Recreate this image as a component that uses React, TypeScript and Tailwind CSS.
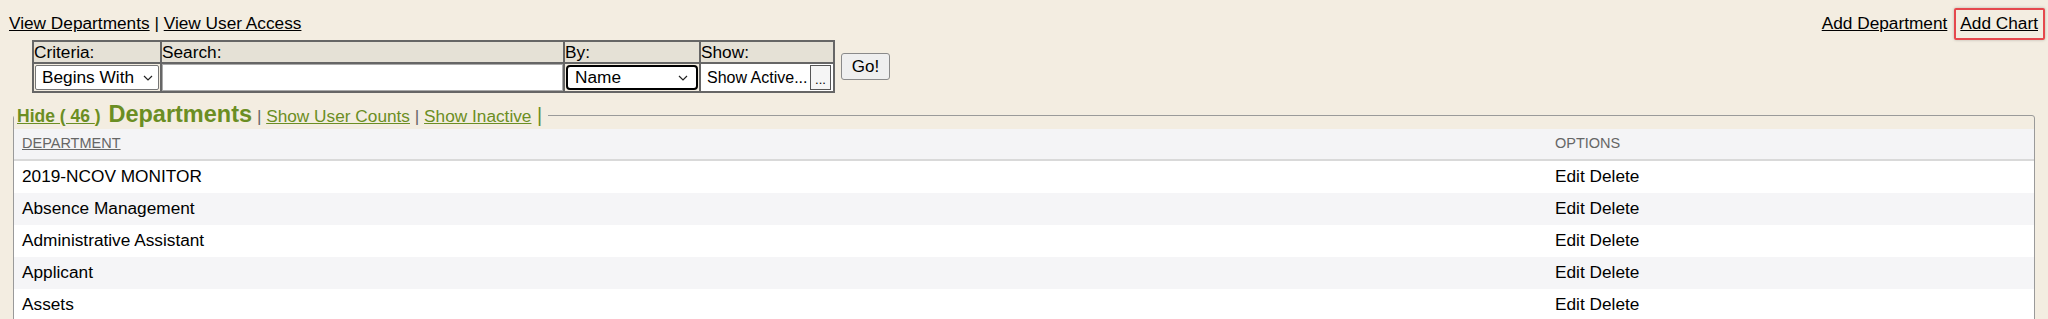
const departments = [
  "2019-NCOV MONITOR",
  "Absence Management",
  "Administrative Assistant",
  "Applicant",
  "Assets",
  "Benefits",
  "Billing",
  "Compliance",
]

function Chevron() {
  return (
    <svg width="10" height="6" viewBox="0 0 10 6" fill="none" className="shrink-0">
      <path d="M1 1l4 4 4-4" stroke="#222" strokeWidth="1.2" />
    </svg>
  )
}

export default function App() {
  return (
    <div className="min-h-screen bg-[#f3ede1] font-['Liberation_Sans',Arial,sans-serif] text-[17.25px] text-black">
      {/* Top links */}
      <div className="flex justify-between pt-[13px] pl-[9px] pr-[10px] leading-[20px]">
        <div>
          <a className="underline">View Departments</a> | <a className="underline">View User Access</a>
        </div>
        <div className="flex gap-[13px]">
          <a className="underline">Add Department</a>
          <span className="relative">
            <a className="underline">Add Chart</a>
            <span className="absolute -left-[6px] -right-[7px] -top-[5px] -bottom-[7px] border-2 border-[#e5484d] rounded-[2px] shadow-[0_0_3px_rgba(0,0,0,0.25)]" />
          </span>
        </div>
      </div>

      {/* Filter */}
      <div className="flex items-center gap-[6px] mt-[7px] ml-[32px]">
        <table className="border-collapse border-2 border-[#666]">
          <thead>
            <tr className="bg-[#e5e1d6] text-left leading-[20px]">
              <th className="border-2 border-[#666] p-0 font-normal w-[128px]">Criteria:</th>
              <th className="border-2 border-[#666] p-0 font-normal w-[403px]">Search:</th>
              <th className="border-2 border-[#666] p-0 font-normal w-[136px]">By:</th>
              <th className="border-2 border-[#666] p-0 font-normal w-[134px]">Show:</th>
            </tr>
          </thead>
          <tbody>
            <tr className="h-[27px]">
              <td className="border-2 border-[#666] p-[1px]">
                <div className="flex items-center justify-between h-[25px] bg-white border border-[#767676] rounded-[2px] pl-[6px] pr-[5px]">
                  <span>Begins With</span>
                  <Chevron />
                </div>
              </td>
              <td className="border-2 border-[#666] p-0">
                <div className="h-[27px] bg-white border border-[#aaa]" />
              </td>
              <td className="border-2 border-[#666] p-[1px]">
                <div className="flex items-center justify-between h-[25px] bg-white border-2 border-black rounded-[4px] pl-[7px] pr-[8px]">
                  <span>Name</span>
                  <Chevron />
                </div>
              </td>
              <td className="border-2 border-[#666] p-0">
                <div className="flex items-center justify-between h-[27px] bg-white pl-[6px] pr-[2px] text-[16px]">
                  <span>Show Active...</span>
                  <span className="flex items-end justify-center w-[21px] h-[25px] border border-[#555] bg-[#f5f5f5] text-[13px] leading-[18px]">...</span>
                </div>
              </td>
            </tr>
          </tbody>
        </table>
        <button className="h-[27px] w-[49px] border border-[#8a8a8a] rounded-[3px] bg-[#efefef] text-[17px] leading-[20px]">Go!</button>
      </div>

      {/* Departments */}
      <fieldset className="mt-[10px] mx-[13px] border border-[#9a9a9a] rounded-[3px]">
        <legend className="pl-[3px] pr-[6px] leading-[23px] text-[#6b8e23]">
          <a className="underline font-bold text-[17.5px]">Hide ( 46 </a>
          <span className="font-bold text-[17.5px]">)</span>{" "}
          <span className="ml-[3px] text-[23.5px] font-bold">Departments</span>
          <span className="text-[#666]"> | </span>
          <a className="underline">Show User Counts</a>
          <span className="text-[#666]"> | </span>
          <a className="underline">Show Inactive</a>
          <span className="text-[20px] font-light"> |</span>
        </legend>

        <div className="grid grid-cols-[minmax(0,1fr)_487px] h-[32px] items-center bg-[#f4f4f6] border-b-2 border-[#d9d9d9] text-[14.5px] text-[#666] mt-[1px]">
          <span className="pl-[8px] underline">DEPARTMENT</span>
          <span className="pl-[8px]">OPTIONS</span>
        </div>
        {departments.map((name, i) => (
          <div
            key={name}
            className={`grid grid-cols-[minmax(0,1fr)_487px] h-[32px] items-center ${i % 2 === 1 ? "bg-[#f5f5f7]" : "bg-white"}`}
          >
            <span className="pl-[8px]">{name}</span>
            <span className="pl-[8px]">Edit Delete</span>
          </div>
        ))}
      </fieldset>
    </div>
  )
}
